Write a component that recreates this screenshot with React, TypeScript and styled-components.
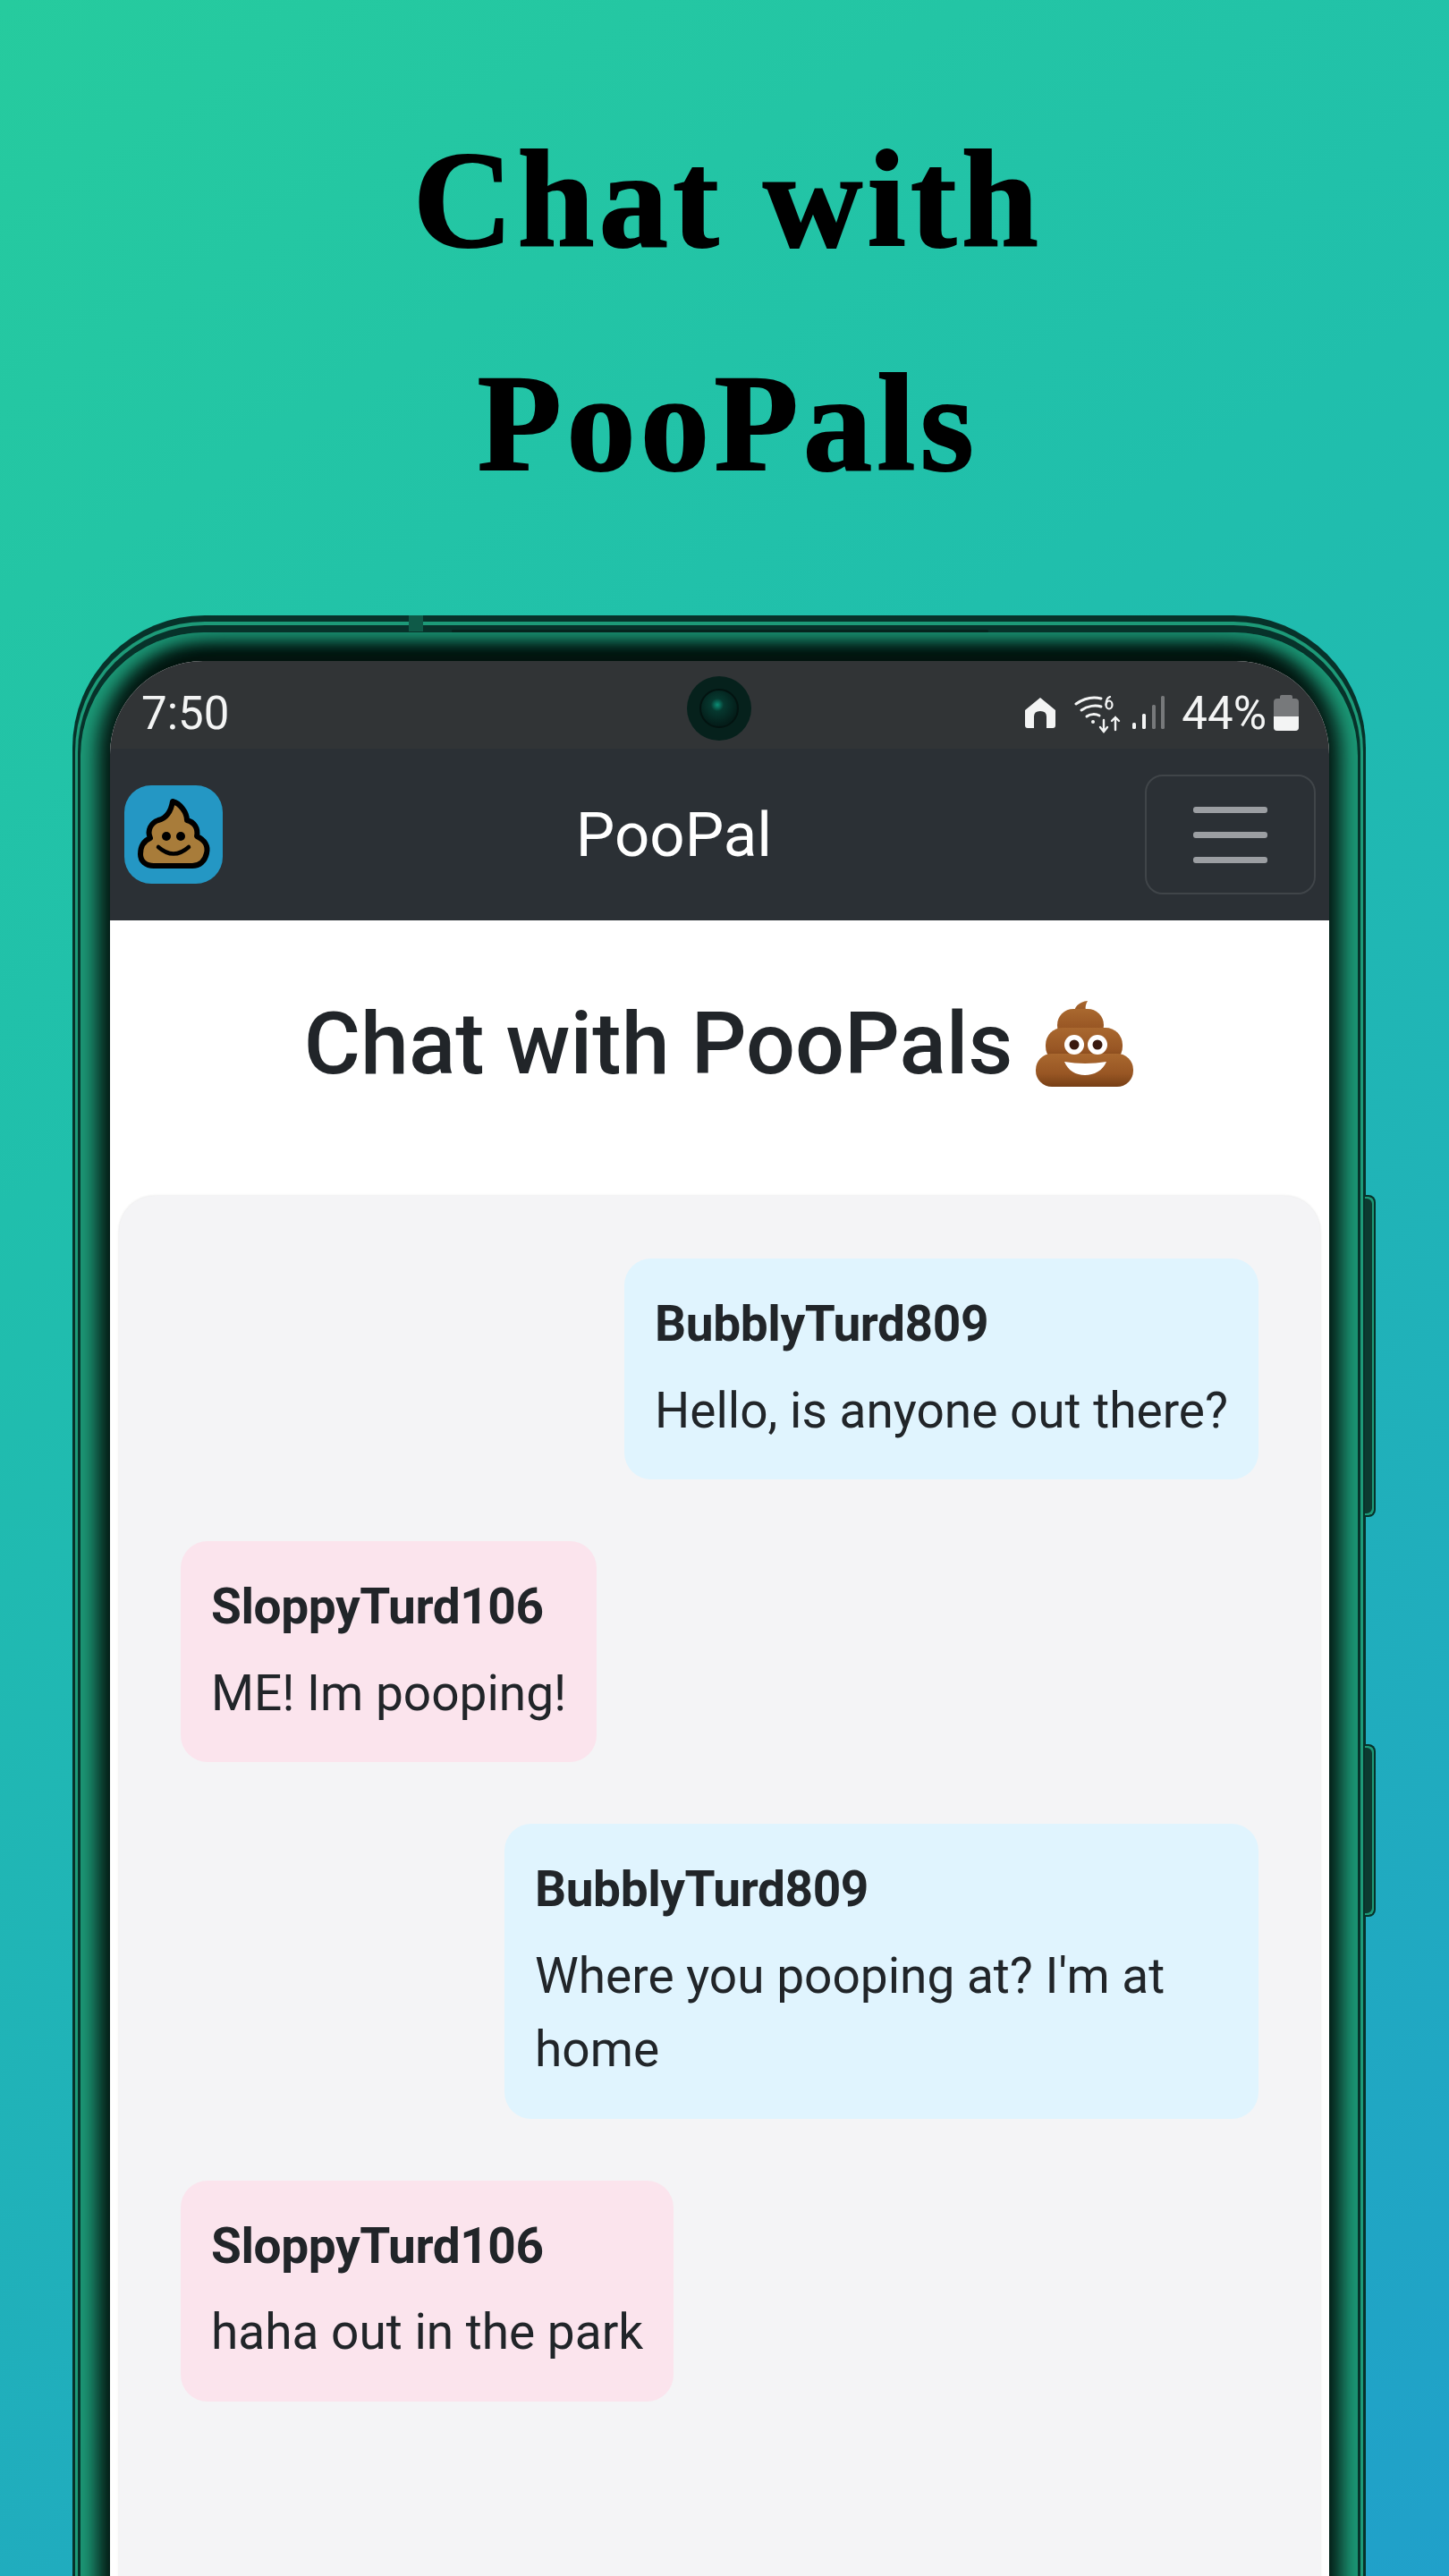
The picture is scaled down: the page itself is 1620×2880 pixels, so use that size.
import React from 'react';
import styled, { createGlobalStyle } from 'styled-components';

interface Message {
  id: number;
  author: string;
  lines: string;
  mine: boolean;
}

const messages: Message[] = [
  { id: 1, author: 'BubblyTurd809', lines: 'Hello, is anyone out there?', mine: true },
  { id: 2, author: 'SloppyTurd106', lines: 'ME! Im pooping!', mine: false },
  { id: 3, author: 'BubblyTurd809', lines: "Where you pooping at? I'm at home", mine: true },
  { id: 4, author: 'SloppyTurd106', lines: 'haha out in the park', mine: false },
];

const LogoPoop = () => (
  <svg width="110" height="110" viewBox="0 0 110 110">
    <path
      d="M54 18C62 20 70 30 70 39C78 41 83 48 81 57C90 61 94 68 92 76C90 85 84 90 76 90L33 90C24 90 18 85 18 77C18 68 22 62 29 59C25 50 30 42 38 39C46 37 52 30 54 18Z"
      fill="#a87c3a"
      stroke="#000"
      strokeWidth="6"
      strokeLinejoin="round"
    />
    <circle cx="47" cy="57" r="5" fill="#000" />
    <circle cx="63" cy="57" r="5" fill="#000" />
    <path d="M38 69Q55 84 72 69" fill="none" stroke="#000" strokeWidth="4.5" strokeLinecap="round" />
  </svg>
);

const EmojiPoop = () => (
  <svg width="112" height="100" viewBox="0 0 112 100">
    <defs>
      <linearGradient id="tier" x1="0" y1="0" x2="0" y2="1">
        <stop offset="0" stopColor="#a9682f" />
        <stop offset="0.6" stopColor="#985624" />
        <stop offset="1" stopColor="#773f15" />
      </linearGradient>
    </defs>
    <path d="M59 2C49 3 43 9 44 18C48 24 58 24 62 18C56 15 55 9 59 2Z" fill="url(#tier)" />
    <rect x="25" y="11" width="52" height="36" rx="18" fill="url(#tier)" />
    <rect x="12" y="32" width="86" height="40" rx="19" fill="url(#tier)" />
    <rect x="1" y="61" width="109" height="37" rx="18" fill="url(#tier)" />
    <circle cx="44" cy="51" r="11" fill="#fff" />
    <circle cx="70" cy="51" r="11" fill="#fff" />
    <circle cx="44" cy="51" r="5.5" fill="#3a1a10" />
    <circle cx="70" cy="51" r="5.5" fill="#3a1a10" />
    <path d="M33 70Q56 74 80 70C76 80 66 85 56 85C46 85 37 80 33 70Z" fill="#fff" />
  </svg>
);

const HomeIcon = () => (
  <svg width="36" height="36" viewBox="0 0 36 36">
    <path
      d="M18 1L35 15V32Q35 35 32 35H25V22Q25 16 18 16Q11 16 11 22V35H4Q1 35 1 32V15Z"
      fill="#f3f4f4"
    />
  </svg>
);

const WifiIcon = () => (
  <svg width="56" height="42" viewBox="0 0 56 42" fill="none" stroke="#f3f4f4" strokeLinecap="round">
    <path d="M2 9C12 2 22 1 30 3" strokeWidth="3" />
    <path d="M8 16C15 11 24 10 30 12" strokeWidth="3" />
    <path d="M14 23C18 20 24 20 28 22" strokeWidth="3" />
    <circle cx="21" cy="29" r="2" fill="#f3f4f4" stroke="none" />
    <ellipse cx="39" cy="10" rx="3.5" ry="4.5" strokeWidth="2.2" />
    <path d="M35.5 10C35.5 5 37 2 40 1" strokeWidth="2.2" />
    <path d="M33 27V40M29 35L33 40L37 35" strokeWidth="2.4" />
    <path d="M46 38V24M42 28L46 24L50 28" strokeWidth="2.4" />
  </svg>
);

const SignalIcon = () => (
  <svg width="38" height="38" viewBox="0 0 38 38">
    <rect x="1" y="30" width="4" height="7" rx="1.5" fill="#f3f4f4" />
    <rect x="12" y="20" width="4" height="17" rx="1.5" fill="#f3f4f4" />
    <rect x="23" y="10" width="4" height="27" rx="1.5" fill="#77797b" />
    <rect x="33" y="0" width="4" height="37" rx="1.5" fill="#77797b" />
  </svg>
);

const App: React.FC = () => (
  <Page>
    <GlobalStyle />
    <Title>
      <TitleLine>Chat with</TitleLine>
      <TitleLine>PooPals</TitleLine>
    </Title>
    <Phone>
      <AntennaBand />
      <Speaker />
      <SideButton $top={648} $height={360} />
      <SideButton $top={1262} $height={193} />
      <RimLine>
        <RimInner>
          <Bezel>
            <Screen>
              <StatusBar>
                <Clock>7:50</Clock>
                <Camera>
                  <Lens />
                </Camera>
                <StatusIcons>
                  <HomeIcon />
                  <WifiGap>
                    <WifiIcon />
                  </WifiGap>
                  <SignalIcon />
                  <Percent>44%</Percent>
                  <Battery>
                    <BatteryCap />
                    <BatteryBody>
                      <BatteryLevel style={{ height: '44%' }} />
                    </BatteryBody>
                  </Battery>
                </StatusIcons>
              </StatusBar>
              <Navbar>
                <Logo>
                  <LogoPoop />
                </Logo>
                <Brand>PooPal</Brand>
                <Toggler aria-label="Toggle navigation">
                  <TogglerBar />
                  <TogglerBar />
                  <TogglerBar />
                </Toggler>
              </Navbar>
              <Content>
                <Heading>
                  Chat with PooPals
                  <EmojiPoop />
                </Heading>
                <ChatBox>
                  {messages.map((message) => (
                    <Bubble key={message.id} $mine={message.mine}>
                      <Author>{message.author}</Author>
                      <Body>{message.lines}</Body>
                    </Bubble>
                  ))}
                </ChatBox>
              </Content>
            </Screen>
          </Bezel>
        </RimInner>
      </RimLine>
    </Phone>
  </Page>
);

export default App;

const GlobalStyle = createGlobalStyle`
  html, body {
    margin: 0;
    padding: 0;
  }
  * {
    box-sizing: border-box;
  }
`;

const Page = styled.div`
  width: 1620px;
  height: 2880px;
  overflow: hidden;
  background: linear-gradient(148deg, #26cb9e 0%, #20bfac 35%, #20a0ca 100%);
  font-family: Roboto, 'Noto Sans', sans-serif;
  display: flex;
  flex-direction: column;
`;

const Title = styled.h1`
  flex: none;
  margin: 0;
  height: 688px;
  padding: 98px 0 0 8px;
  color: #000;
  font-family: 'Liberation Serif', serif;
  font-size: 154px;
  font-weight: 700;
  text-align: center;
  letter-spacing: 5.5px;
  -webkit-text-stroke: 2px #000;
`;

const TitleLine = styled.div`
  height: 250px;
  line-height: 250px;
`;

const Phone = styled.div`
  position: relative;
  flex: none;
  width: 1446px;
  height: 2400px;
  margin-left: 81px;
  padding: 7px 3px 0;
  border-radius: 148px;
  background: #07322a;
`;

const AntennaBand = styled.div`
  position: absolute;
  top: 0;
  left: 376px;
  width: 16px;
  height: 18px;
  background: #0f5a48;
  z-index: 1;
`;

const Speaker = styled.div`
  position: absolute;
  top: 16px;
  left: 424px;
  width: 600px;
  height: 3px;
  border-radius: 2px;
  background: #06241e;
  z-index: 1;
`;

const SideButton = styled.div<{ $top: number; $height: number }>`
  position: absolute;
  top: ${(p) => p.$top}px;
  right: -11px;
  width: 12px;
  height: ${(p) => p.$height}px;
  border: 2px solid #07322a;
  border-left: none;
  border-radius: 0 8px 8px 0;
  background: #0c3a30;
  box-shadow: inset -2px 2px 0 #1d9a78, inset -2px -2px 0 #1d9a78;
`;

const RimLine = styled.div`
  height: 100%;
  padding: 4px 3px 0;
  border-radius: 145px;
  background: #1d9a78;
`;

const RimInner = styled.div`
  height: 100%;
  padding: 8px 3px 0;
  border-radius: 142px;
  background: #07322a;
`;

const Bezel = styled.div`
  height: 100%;
  padding: 32px 32px 0 33px;
  border-radius: 138px;
  background: #03140f;
  box-shadow: inset 20px 0 22px -1px #1d9a78, inset -20px 0 22px -1px #1d9a78, inset 0 18px 18px -8px #0f5a48;
`;

const Screen = styled.div`
  height: 100%;
  border-radius: 104px;
  overflow: hidden;
  background: #fff;
`;

const StatusBar = styled.div`
  position: relative;
  display: flex;
  align-items: center;
  justify-content: space-between;
  height: 98px;
  padding: 18px 34px 0 35px;
  background: #313436;
  color: #f3f4f4;
`;

const Clock = styled.span`
  font-size: 51px;
  line-height: 1;
`;

const Camera = styled.div`
  position: absolute;
  left: 645px;
  top: 17px;
  width: 72px;
  height: 72px;
  border-radius: 50%;
  background: #06211c;
  display: flex;
  align-items: center;
  justify-content: center;
`;

const Lens = styled.div`
  width: 44px;
  height: 44px;
  border-radius: 50%;
  border: 2px solid #031310;
  background: radial-gradient(circle at 45% 40%, #0b8f76 0, #06382f 22%, #041d19 70%);
`;

const StatusIcons = styled.div`
  display: flex;
  align-items: center;
`;

const WifiGap = styled.div`
  display: flex;
  margin: 4px 8px 0 20px;
`;

const Percent = styled.span`
  margin: 0 8px 0 18px;
  font-size: 51px;
  line-height: 1;
`;

const Battery = styled.div`
  display: flex;
  flex-direction: column;
  align-items: center;
  width: 28px;
`;

const BatteryCap = styled.div`
  width: 14px;
  height: 4px;
  border-radius: 2px 2px 0 0;
  background: #77797b;
`;

const BatteryBody = styled.div`
  position: relative;
  width: 28px;
  height: 36px;
  border-radius: 4px;
  overflow: hidden;
  background: #77797b;
`;

const BatteryLevel = styled.div`
  position: absolute;
  left: 0;
  right: 0;
  bottom: 0;
  background: #f3f4f4;
`;

const Navbar = styled.nav`
  display: flex;
  align-items: center;
  justify-content: space-between;
  height: 192px;
  padding: 0 15px 0 16px;
  background: #2b3035;
`;

const Logo = styled.div`
  width: 110px;
  height: 110px;
  border-radius: 30px;
  background: #2497c4;
  overflow: hidden;
`;

const Brand = styled.span`
  margin-right: 22px;
  color: #fff;
  font-size: 69px;
`;

const Toggler = styled.button`
  display: flex;
  flex-direction: column;
  align-items: center;
  justify-content: center;
  gap: 21px;
  width: 191px;
  height: 134px;
  padding: 0;
  border: 2px solid rgba(255, 255, 255, 0.1);
  border-radius: 20px;
  background: transparent;
`;

const TogglerBar = styled.span`
  width: 83px;
  height: 7px;
  border-radius: 3px;
  background: #9b9ea2;
`;

const Content = styled.main`
  padding: 0 10px;
  background: #fff;
`;

const Heading = styled.h2`
  display: flex;
  align-items: center;
  justify-content: center;
  gap: 25px;
  height: 308px;
  margin: 0;
  padding-bottom: 32px;
  color: #212529;
  font-size: 97px;
  font-weight: 500;
`;

const ChatBox = styled.section`
  display: flex;
  flex-direction: column;
  gap: 69px;
  min-height: 1600px;
  padding: 70px 69px;
  border-radius: 40px;
  background: #f4f4f6;
  box-shadow: 0 0 3px rgba(0, 0, 0, 0.12);
`;

const Bubble = styled.article<{ $mine: boolean }>`
  align-self: ${(p) => (p.$mine ? 'flex-end' : 'flex-start')};
  max-width: 843px;
  padding: 32px 34px 36px;
  border-radius: 30px;
  background: ${(p) => (p.$mine ? '#e0f4fe' : '#fbe4ed')};
  color: #212529;
  font-size: 55px;
  line-height: 82.5px;
`;

const Author = styled.div`
  margin-bottom: 14px;
  font-weight: 700;
  letter-spacing: -0.4px;
`;

const Body = styled.div``;
